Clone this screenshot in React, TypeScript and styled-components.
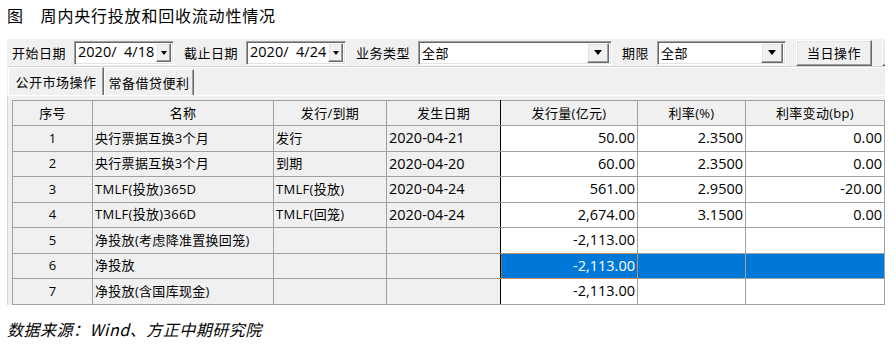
import React from 'react';
import styled, { createGlobalStyle, css } from 'styled-components';

type Row = {
  no: number;
  name: string;
  kind?: string;
  date?: string;
  amount: string;
  rate?: string;
  change?: string;
};

const rows: Row[] = [
  { no: 1, name: '央行票据互换3个月', kind: '发行', date: '2020-04-21', amount: '50.00', rate: '2.3500', change: '0.00' },
  { no: 2, name: '央行票据互换3个月', kind: '到期', date: '2020-04-20', amount: '60.00', rate: '2.3500', change: '0.00' },
  { no: 3, name: 'TMLF(投放)365D', kind: 'TMLF(投放)', date: '2020-04-24', amount: '561.00', rate: '2.9500', change: '-20.00' },
  { no: 4, name: 'TMLF(投放)366D', kind: 'TMLF(回笼)', date: '2020-04-24', amount: '2,674.00', rate: '3.1500', change: '0.00' },
  { no: 5, name: '净投放(考虑降准置换回笼)', amount: '-2,113.00' },
  { no: 6, name: '净投放', amount: '-2,113.00' },
  { no: 7, name: '净投放(含国库现金)', amount: '-2,113.00' },
];

const SELECTED = 6;

function DropArrow({ wide }: { wide?: boolean }) {
  return (
    <DropButton $wide={wide}>
      <Triangle $wide={wide} />
    </DropButton>
  );
}

function App() {
  return (
    <>
      <GlobalStyle />
      <Page>
        <Title>图　周内央行投放和回收流动性情况</Title>

        <Panel>
          <Toolbar>
            <Field>
              <Label>开始日期</Label>
              <Input $width={100}>
                <DateText>2020/  4/18</DateText>
                <DropArrow />
              </Input>
            </Field>
            <Field>
              <Label>截止日期</Label>
              <Input $width={100}>
                <DateText>2020/  4/24</DateText>
                <DropArrow />
              </Input>
            </Field>
            <Field>
              <Label>业务类型</Label>
              <Input $width={194}>
                <ComboText>全部</ComboText>
                <DropArrow wide />
              </Input>
            </Field>
            <Field>
              <Label>期限</Label>
              <Input $width={129}>
                <ComboText>全部</ComboText>
                <DropArrow wide />
              </Input>
            </Field>
            <Button>当日操作</Button>
            {/* next button, only its left edge shows at the panel border */}
            <Button aria-hidden />
          </Toolbar>

          <TabBar>
            <Tab $active>公开市场操作</Tab>
            <Tab>常备借贷便利</Tab>
          </TabBar>

          <TabPage>
            <Grid>
              <colgroup>
                <col style={{ width: 80 }} />
                <col style={{ width: 181 }} />
                <col style={{ width: 113 }} />
                <col style={{ width: 114 }} />
                <col style={{ width: 137 }} />
                <col style={{ width: 108 }} />
                <col style={{ width: 139 }} />
              </colgroup>
              <thead>
                <tr>
                  <Head>序号</Head>
                  <Head>名称</Head>
                  <Head>发行/到期</Head>
                  <Head $split>发生日期</Head>
                  <Head>发行量(亿元)</Head>
                  <Head>利率(%)</Head>
                  <Head>利率变动(bp)</Head>
                </tr>
              </thead>
              <tbody>
                {rows.map((r) => {
                  const sel = r.no === SELECTED;
                  return (
                    <tr key={r.no}>
                      <Cell $align="center">{r.no}</Cell>
                      <Cell>{r.name}</Cell>
                      <Cell>{r.kind}</Cell>
                      <Cell $split $num>{r.date}</Cell>
                      <Cell $white $num $align="right" $selected={sel} $focus={sel}>
                        {r.amount}
                      </Cell>
                      <Cell $white $num $align="right" $selected={sel}>
                        {r.rate}
                      </Cell>
                      <Cell $white $num $align="right" $selected={sel}>
                        {r.change}
                      </Cell>
                    </tr>
                  );
                })}
              </tbody>
            </Grid>
          </TabPage>
        </Panel>

        <Source>数据来源：Wind、方正中期研究院</Source>
      </Page>
    </>
  );
}

export default App;

// Styles
const GlobalStyle = createGlobalStyle`
  body {
    margin: 0;
    background: #fff;
    color: #000;
    font-family: "Open Sans", "Noto Sans CJK SC", sans-serif;
  }
`;

const Page = styled.div`
  width: 896px;
  height: 352px;
  overflow: hidden;
`;

const Title = styled.div`
  height: 31px;
  line-height: 31px;
  margin-bottom: 8px;
  padding-left: 7px;
  font-family: "Noto Sans CJK SC", sans-serif;
  font-size: 16px;
  letter-spacing: 0.8px;
  white-space: pre;
`;

const Panel = styled.div`
  margin-left: 7px;
  width: 878px;
  background: #f0f0f0;
  display: flex;
  flex-direction: column;
  overflow: hidden;
`;

const Toolbar = styled.div`
  height: 27px;
  display: flex;
  align-items: center;
  gap: 10px;
  padding-left: 5px;
  border-bottom: 1px solid #d6d6d6;
  white-space: nowrap;
  overflow: hidden;
`;

const Field = styled.div`
  display: flex;
  align-items: center;
  gap: 8px;
`;

const Label = styled.span`
  font-family: "Noto Sans CJK SC", sans-serif;
  font-size: 13px;
  letter-spacing: 0.5px;
  line-height: 1;
`;

const Input = styled.div<{ $width: number }>`
  box-sizing: border-box;
  width: ${(p) => p.$width}px;
  height: 24px;
  display: flex;
  align-items: center;
  justify-content: space-between;
  background: #fff;
  border: 1px solid;
  border-color: #a0a0a0 #fff #fff #a0a0a0;
  box-shadow: inset 1px 1px 0 #696969, inset -1px -1px 0 #e3e3e3;
  padding: 2px 2px 2px 3px;
`;

const DateText = styled.span`
  font-family: "Open Sans", sans-serif;
  font-size: 14.5px;
  line-height: 1;
  white-space: pre;
`;

const ComboText = styled.span`
  font-family: "Noto Sans CJK SC", sans-serif;
  font-size: 13px;
  letter-spacing: 0.5px;
  line-height: 1;
`;

const DropButton = styled.div<{ $wide?: boolean }>`
  box-sizing: border-box;
  width: ${(p) => (p.$wide ? 22 : 15)}px;
  height: ${(p) => (p.$wide ? 20 : 19)}px;
  display: flex;
  align-items: center;
  justify-content: center;
  background: #f0f0f0;
  border: 1px solid;
  border-color: #fff #696969 #696969 #fff;
  box-shadow: inset -1px -1px 0 #a0a0a0, inset 1px 1px 0 #e3e3e3;
`;

const Triangle = styled.span<{ $wide?: boolean }>`
  width: 0;
  height: 0;
  border-left: ${(p) => (p.$wide ? 4.5 : 3.5)}px solid transparent;
  border-right: ${(p) => (p.$wide ? 4.5 : 3.5)}px solid transparent;
  border-top: ${(p) => (p.$wide ? 5 : 4)}px solid #000;
`;

const Button = styled.div`
  box-sizing: border-box;
  flex: none;
  width: 76px;
  height: 26px;
  display: flex;
  align-items: center;
  justify-content: center;
  background: #f0f0f0;
  border: 1px solid;
  border-color: #fff #696969 #696969 #fff;
  box-shadow: inset -1px -1px 0 #a0a0a0, inset 1px 1px 0 #e3e3e3;
  font-family: "Noto Sans CJK SC", sans-serif;
  font-size: 13px;
  letter-spacing: 0.5px;
`;

const TabBar = styled.div`
  height: 28px;
  display: flex;
  align-items: flex-end;
  padding-left: 1px;
  border-top: 1px solid #fff;
  box-sizing: border-box;
`;

const Tab = styled.div<{ $active?: boolean }>`
  box-sizing: border-box;
  width: ${(p) => (p.$active ? 96 : 90)}px;
  height: ${(p) => (p.$active ? 28 : 26)}px;
  display: flex;
  align-items: center;
  justify-content: center;
  border-top: 1px solid #fff;
  border-left: 1px solid #fff;
  border-right: 1px solid #696969;
  box-shadow: inset -1px 0 0 #a0a0a0;
  font-family: "Noto Sans CJK SC", sans-serif;
  font-size: 13px;
  letter-spacing: 0.5px;
  ${(p) =>
    p.$active &&
    css`
      position: relative;
      z-index: 1;
    `}
`;

const TabPage = styled.div`
  border-top: 1px solid #fff;
  border-left: 1px solid #d8d8d8;
  padding: 4px 0 0 4px;
`;

const Grid = styled.table`
  table-layout: fixed;
  width: 873px;
  border-collapse: collapse;
  font-size: 13px;
  letter-spacing: 0.3px;

  tr {
    height: 25.5px;
  }

  thead tr {
    height: 25px;
  }
`;

const Head = styled.th<{ $split?: boolean }>`
  padding: 0 2px;
  font-weight: 400;
  text-align: center;
  line-height: 1;
  background: #f0f0f0;
  border: 1px solid #a0a0a0;
  white-space: nowrap;
  ${(p) =>
    p.$split &&
    css`
      border-right-color: #000;
    `}
`;

const Cell = styled.td<{
  $align?: 'left' | 'center' | 'right';
  $white?: boolean;
  $num?: boolean;
  $split?: boolean;
  $selected?: boolean;
  $focus?: boolean;
}>`
  padding: 0 2px;
  line-height: 1;
  text-align: ${(p) => p.$align ?? 'left'};
  white-space: nowrap;
  overflow: hidden;
  background: ${(p) => (p.$selected ? '#0078d7' : p.$white ? '#fff' : '#f0f0f0')};
  color: ${(p) => (p.$selected ? '#fff' : '#000')};
  border: 1px solid #a0a0a0;

  ${(p) =>
    p.$num &&
    css`
      font-size: 14.5px;
      letter-spacing: 0;
    `}

  ${(p) =>
    p.$split &&
    css`
      border-right-color: #000;
    `}

  ${(p) =>
    p.$focus &&
    css`
      outline: 1px dotted #e0802c;
      outline-offset: -1px;
    `}
`;

const Source = styled.div`
  margin-top: 12px;
  padding-left: 7px;
  line-height: 24px;
  font-family: "Noto Sans CJK SC", sans-serif;
  font-size: 16px;
  font-style: italic;
  letter-spacing: 0.5px;
`;
